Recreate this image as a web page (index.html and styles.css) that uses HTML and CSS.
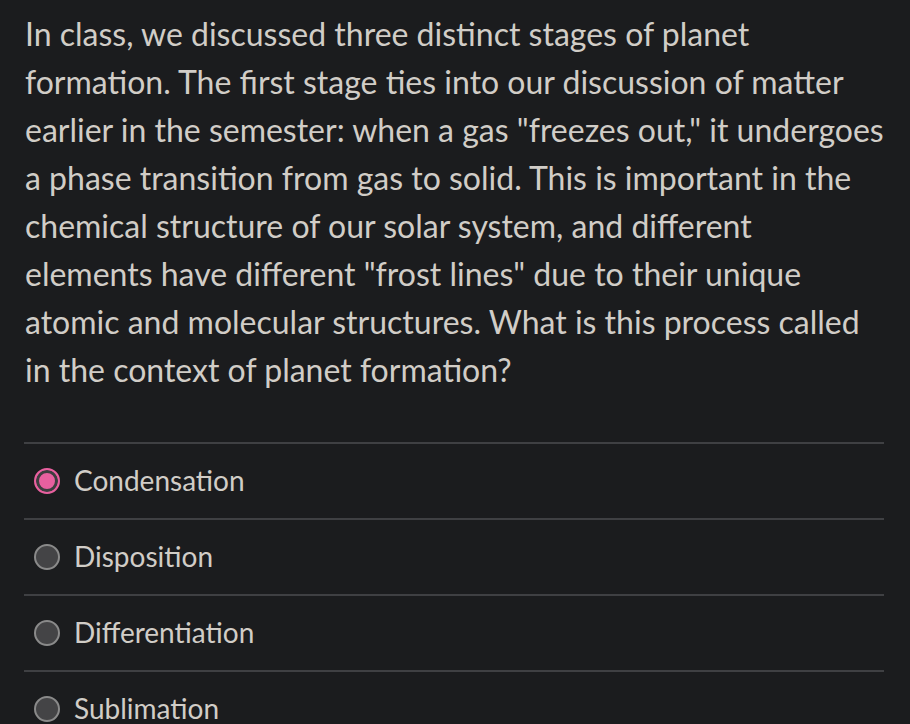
FILE: index.html
```html
<!DOCTYPE html>
<html lang="en">
<head>
    <meta charset="UTF-8">
    <meta name="viewport" content="width=device-width, initial-scale=1.0">
    <title>Quiz Question</title>
    <link rel="stylesheet" href="styles.css">
</head>
<body>
    <div class="question">
        <p class="question-text">In class, we discussed three distinct stages of planet formation. The first stage ties into our discussion of matter earlier in the semester: when a gas "freezes out," it undergoes a phase transition from gas to solid. This is important in the chemical structure of our solar system, and different elements have different "frost lines" due to their unique atomic and molecular structures. What is this process called in the context of planet formation?</p>

        <div class="answers">
            <label class="answer">
                <input type="radio" name="answer" value="condensation" checked>
                <span>Condensation</span>
            </label>
            <label class="answer">
                <input type="radio" name="answer" value="disposition">
                <span>Disposition</span>
            </label>
            <label class="answer">
                <input type="radio" name="answer" value="differentiation">
                <span>Differentiation</span>
            </label>
            <label class="answer">
                <input type="radio" name="answer" value="sublimation">
                <span>Sublimation</span>
            </label>
        </div>
    </div>
</body>
</html>
```

FILE: styles.css
```css
* {
    margin: 0;
    padding: 0;
    box-sizing: border-box;
}

body {
    font-family: Lato, 'Noto Sans', sans-serif;
    background-color: #1b1c1e;
    color: #d1cdc7;
    overflow: hidden;
}

.question {
    padding: 10px 24px 0 25px;
    width: 910px;
}

.question-text {
    font-size: 32px;
    line-height: 48px;
}

.answers {
    margin-top: 48px;
    margin-left: -1px;
    margin-right: 2px;
}

.answer {
    display: flex;
    align-items: center;
    gap: 14px;
    height: 76px;
    padding-left: 10px;
    border-top: 2px solid #3f4043;
    font-size: 28px;
    cursor: pointer;
}

.answer span {
    margin-bottom: 3px;
}

.answer input {
    appearance: none;
    flex-shrink: 0;
    width: 26px;
    height: 26px;
    border-radius: 50%;
    border: 2px solid #8a8a8a;
    background-color: #444446;
    margin: 0;
}

.answer input:checked {
    border-color: #e8609f;
    background-color: #e8609f;
    box-shadow: inset 0 0 0 3px #3d3d3f;
}
```
